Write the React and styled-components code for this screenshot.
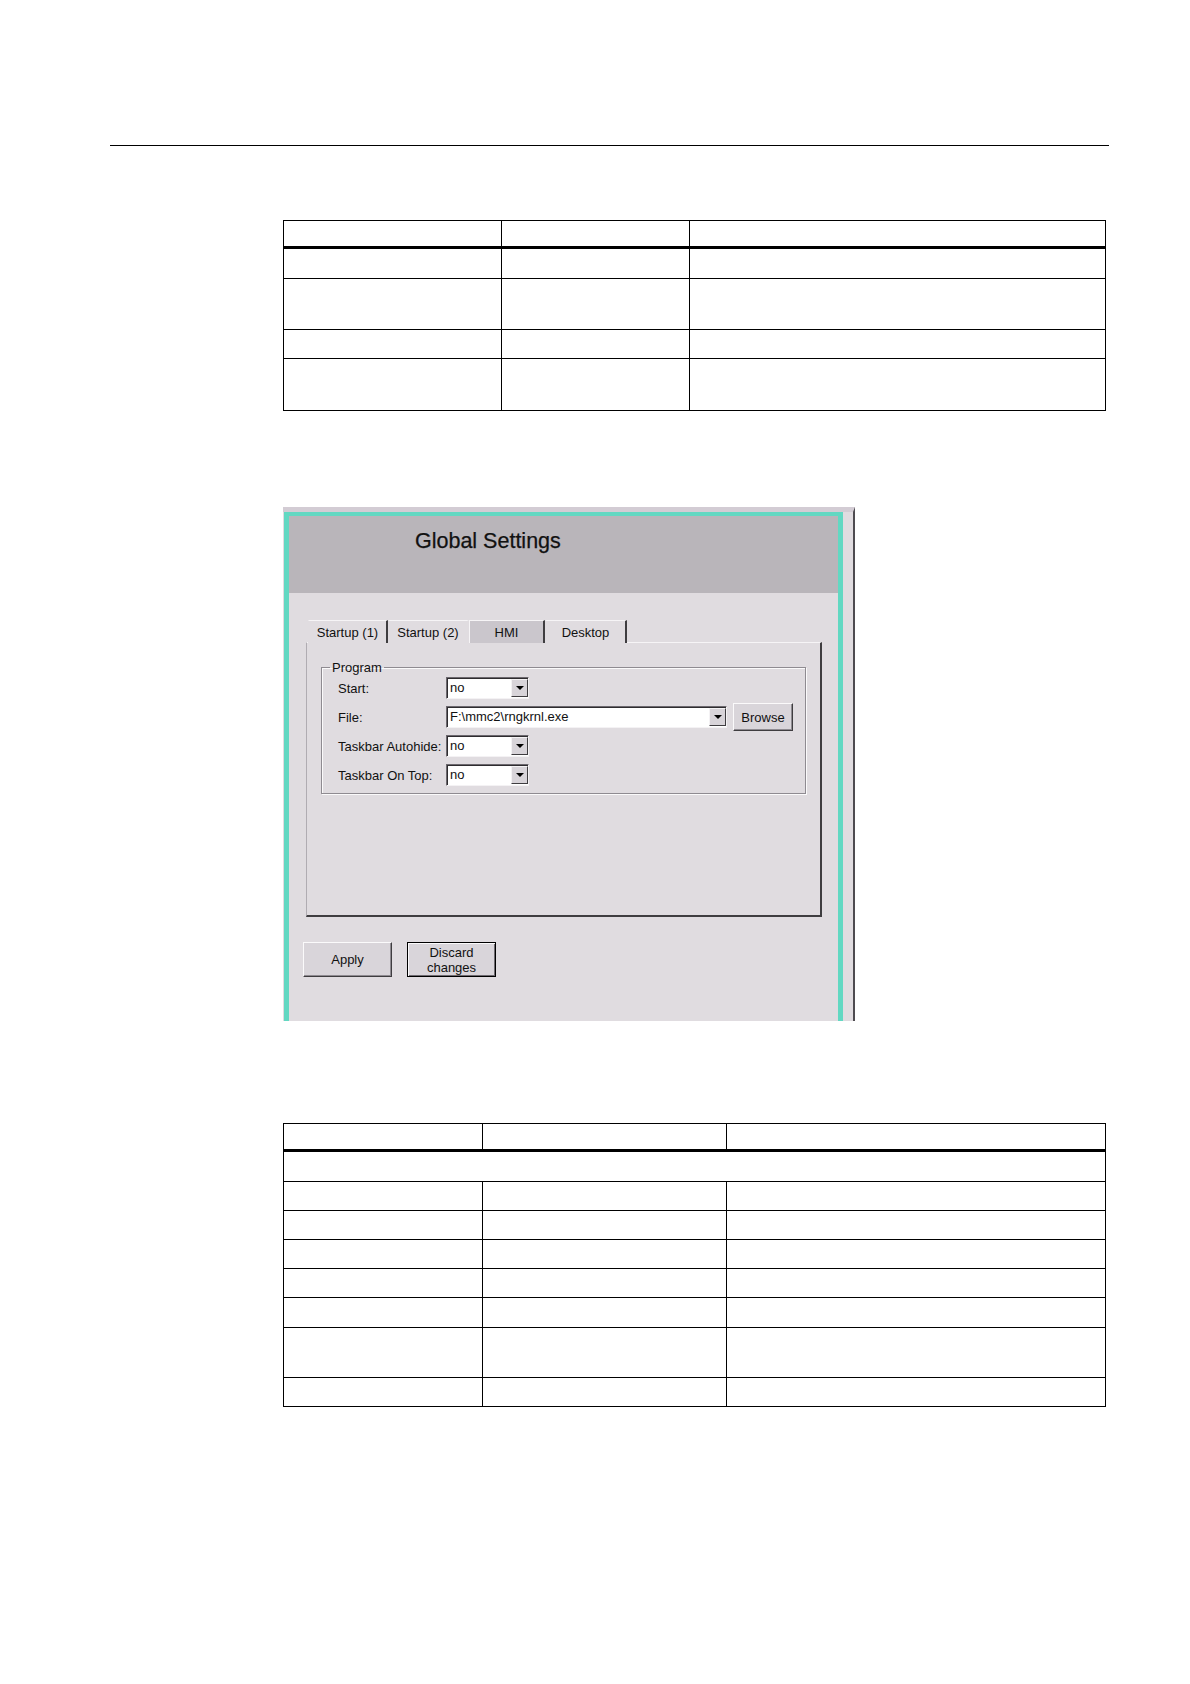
import React from 'react'
import styled, { createGlobalStyle } from 'styled-components'

const GlobalStyle = createGlobalStyle`
    body{
        margin:0;
        background:#fff;
        font-family:"Liberation Sans", Arial, sans-serif;
    }
`
const Page = styled.div`
    width:1190px;
    min-height:1684px;
    display:flex;
    flex-direction:column;
    padding-top:145px;
    box-sizing:border-box;
`
const Rule = styled.div`
    margin-left:110px;
    width:999px;
    border-top:1px solid #000;
`
const Table = styled.div`
    margin-left:283px;
    margin-top:${p => p.$top}px;
    width:823px;
    border:1px solid #000;
    border-bottom:none;
    box-sizing:border-box;
`
const Row = styled.div`
    display:grid;
    grid-template-columns:${p => p.$cols};
    height:${p => p.$h}px;
    box-sizing:border-box;
    border-bottom:${p => (p.$thick ? 3 : 1)}px solid #000;
`
const Cell = styled.div`
    border-right:1px solid #000;
    &:last-child{
        border-right:none;
    }
`
const Window = styled.div`
    margin-left:283px;
    margin-top:96px;
    width:572px;
    height:514px;
    box-sizing:border-box;
    background:#e0dce0;
    border-top:5px solid #d3ccd4;
    border-right:2px solid #4e4b50;
    padding:0 10px 0 1px;
    display:flex;
`
const Frame = styled.div`
    flex:1;
    display:flex;
    flex-direction:column;
    border-top:4px solid #62d8c2;
    border-left:5px solid #62d8c2;
    border-right:5px solid #62d8c2;
`
const Header = styled.div`
    height:77px;
    box-sizing:border-box;
    background:#b9b5ba;
    padding:13px 0 0 126px;
    font-size:21.5px;
    color:#111;
    -webkit-text-stroke:0.25px #111;
`
const Body = styled.div`
    padding:27px 0 0 17px;
    font-size:13px;
    color:#111;
`
const Tabs = styled.div`
    display:flex;
    height:23px;
    margin-left:2px;
`
const Tab = styled.div`
    width:${p => p.$w}px;
    box-sizing:border-box;
    display:flex;
    align-items:center;
    justify-content:center;
    background:${p => (p.$active ? '#cac6cc' : '#e0dce0')};
    border-top:1px solid #f6f4f6;
    border-left:1px solid ${p => (p.$active ? '#f6f4f6' : 'transparent')};
    border-right:2px solid ${p => (p.$edge ? '#3f3d40' : 'transparent')};
`
const Panel = styled.div`
    width:516px;
    height:275px;
    margin-top:-1px;
    box-sizing:border-box;
    border-top:1px solid #f6f4f6;
    border-left:1px solid #b0acb2;
    border-right:2px solid #3f3d40;
    border-bottom:2px solid #3f3d40;
    padding:17px 0 0 14px;
`
const Group = styled.fieldset`
    margin:0;
    width:485px;
    box-sizing:border-box;
    border:1px solid #8f8b91;
    box-shadow:1px 1px 0 #fbfafb, inset 1px 1px 0 #fbfafb;
    padding:2px 0 7px 16px;
`
const Legend = styled.legend`
    margin-left:-8px;
    padding:0 2px;
    font-size:13px;
    line-height:15px;
`
const Form = styled.div`
    display:grid;
    grid-template-columns:108px auto;
    grid-template-rows:repeat(4, 22px);
    row-gap:7px;
    align-items:center;
`
const Label = styled.div`
    white-space:nowrap;
`
const Line = styled.div`
    display:flex;
    align-items:center;
    gap:6px;
`
const Combo = styled.div`
    width:${p => p.$w}px;
    height:22px;
    box-sizing:border-box;
    display:flex;
    background:#fff;
    border:1px solid;
    border-color:#6c686e #f4f2f4 #f4f2f4 #6c686e;
    box-shadow:inset 1px 1px 0 #2e2c2f;
`
const Value = styled.div`
    flex:1;
    padding:2px 0 0 3px;
    line-height:16px;
`
const Drop = styled.div`
    width:17px;
    margin:1px 0 1px 0;
    box-sizing:border-box;
    background:#d8d4d9;
    border:1px solid;
    border-color:#f4f2f4 #3f3d40 #3f3d40 #f4f2f4;
    display:flex;
    align-items:center;
    justify-content:center;
    &::after{
        content:'';
        border-left:4px solid transparent;
        border-right:4px solid transparent;
        border-top:4px solid #000;
    }
`
const Button = styled.div`
    width:${p => p.$w}px;
    height:${p => p.$h}px;
    box-sizing:border-box;
    display:flex;
    align-items:center;
    justify-content:center;
    text-align:center;
    line-height:15px;
    background:#d9d5da;
    border:1px solid;
    border-color:${p => (p.$default ? '#000' : '#fbfafb #3f3d40 #3f3d40 #fbfafb')};
    box-shadow:${p => (p.$default
        ? 'inset 1px 1px 0 #fbfafb, inset -1px -1px 0 #6e6a70'
        : 'inset -1px -1px 0 #8f8b91')};
`
const Browse = styled(Button)`
    margin:-3px 0;
`
const Actions = styled.div`
    display:flex;
    gap:15px;
    margin:25px 0 0 -3px;
`

const table1 = [
    { h: 28, thick: true },
    { h: 30 },
    { h: 51 },
    { h: 29 },
    { h: 52 },
]
const table2 = [
    { h: 28, thick: true },
    { h: 30, span: true },
    { h: 29 },
    { h: 29 },
    { h: 29 },
    { h: 29 },
    { h: 30 },
    { h: 50 },
    { h: 29 },
]

const DataTable = ({ top, cols, rows }) => (
  <Table $top={top}>
    {rows.map((r, i) => (
      <Row key={i} $h={r.h} $thick={r.thick} $cols={r.span ? '1fr' : cols}>
        {r.span ? <Cell /> : <><Cell /><Cell /><Cell /></>}
      </Row>
    ))}
  </Table>
)

const Select = ({ w, value }) => (
  <Combo $w={w}>
    <Value>{value}</Value>
    <Drop />
  </Combo>
)

const App = () => {
  return (
    <Page>
      <GlobalStyle />
      <Rule />
      <DataTable top={74} cols="218px 188px 1fr" rows={table1} />
      <Window>
        <Frame>
          <Header>Global Settings</Header>
          <Body>
            <Tabs>
              <Tab $w={80} $edge>Startup (1)</Tab>
              <Tab $w={81}>Startup (2)</Tab>
              <Tab $w={76} $active $edge>HMI</Tab>
              <Tab $w={82} $edge>Desktop</Tab>
            </Tabs>
            <Panel>
              <Group>
                <Legend>Program</Legend>
                <Form>
                  <Label>Start:</Label>
                  <Select w={83} value="no" />
                  <Label>File:</Label>
                  <Line>
                    <Select w={281} value="F:\mmc2\rngkrnl.exe" />
                    <Browse $w={60} $h={28}>Browse</Browse>
                  </Line>
                  <Label>Taskbar Autohide:</Label>
                  <Select w={83} value="no" />
                  <Label>Taskbar On Top:</Label>
                  <Select w={83} value="no" />
                </Form>
              </Group>
            </Panel>
            <Actions>
              <Button $w={89} $h={35}>Apply</Button>
              <Button $w={89} $h={35} $default>Discard<br />changes</Button>
            </Actions>
          </Body>
        </Frame>
      </Window>
      <DataTable top={102} cols="199px 244px 1fr" rows={table2} />
    </Page>
  )
}

export default App
